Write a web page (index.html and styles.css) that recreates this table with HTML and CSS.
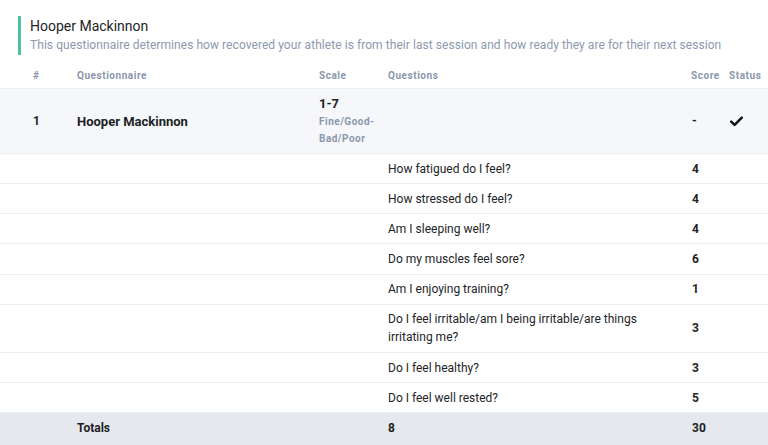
FILE: index.html
```html
<!DOCTYPE html>
<html>
<head>
<meta charset="utf-8">
<link rel="stylesheet" href="styles.css">
</head>
<body>
<div class="intro">
  <div class="intro-title">Hooper Mackinnon</div>
  <div class="intro-desc">This questionnaire determines how recovered your athlete is from their last session and how ready they are for their next session</div>
</div>
<table class="qtable">
  <colgroup>
    <col class="c-num"><col class="c-name"><col class="c-scale"><col class="c-q"><col class="c-score"><col class="c-status">
  </colgroup>
  <thead>
    <tr><th class="first">#</th><th>Questionnaire</th><th>Scale</th><th class="qcol">Questions</th><th>Score</th><th>Status</th></tr>
  </thead>
  <tbody>
    <tr class="main">
      <td class="first strong">1</td>
      <td class="name">Hooper Mackinnon</td>
      <td><div class="scale-num">1-7</div><div class="scale-label">Fine/Good-Bad/Poor</div></td>
      <td></td>
      <td class="strong score">-</td>
      <td><svg class="check" width="13" height="11" viewBox="0 0 13 11"><path d="M1.2 5.6 L4.6 8.9 L11.8 1.6" fill="none" stroke="#111" stroke-width="2.4" stroke-linecap="round" stroke-linejoin="round"/></svg></td>
    </tr>
    <tr class="q"><td class="first"></td><td></td><td></td><td class="qcol">How fatigued do I feel?</td><td class="strong score">4</td><td></td></tr>
    <tr class="q"><td class="first"></td><td></td><td></td><td class="qcol">How stressed do I feel?</td><td class="strong score">4</td><td></td></tr>
    <tr class="q"><td class="first"></td><td></td><td></td><td class="qcol">Am I sleeping well?</td><td class="strong score">4</td><td></td></tr>
    <tr class="q"><td class="first"></td><td></td><td></td><td class="qcol">Do my muscles feel sore?</td><td class="strong score">6</td><td></td></tr>
    <tr class="q"><td class="first"></td><td></td><td></td><td class="qcol">Am I enjoying training?</td><td class="strong score">1</td><td></td></tr>
    <tr class="q"><td class="first"></td><td></td><td></td><td class="qcol wrap">Do I feel irritable/am I being irritable/are things irritating me?</td><td class="strong score">3</td><td></td></tr>
    <tr class="q"><td class="first"></td><td></td><td></td><td class="qcol">Do I feel healthy?</td><td class="strong score">3</td><td></td></tr>
    <tr class="q"><td class="first"></td><td></td><td></td><td class="qcol">Do I feel well rested?</td><td class="strong score">5</td><td></td></tr>
    <tr class="totals"><td class="first"></td><td class="strong">Totals</td><td></td><td class="strong qcol">8</td><td class="strong score">30</td><td></td></tr>
  </tbody>
</table>
</body>
</html>
```
FILE: styles.css
```css
html, body {
  margin: 0;
  padding: 0;
  background: #ffffff;
  font-family: Roboto, "Liberation Sans", sans-serif;
  color: #1c1f24;
}
.intro {
  margin: 16px 0 0 18px;
  border-left: 3px solid #4cc3a0;
  padding-left: 9px;
}
.intro-title {
  font-size: 14px;
  line-height: 20px;
  color: #222428;
}
.intro-desc {
  font-size: 12px;
  line-height: 19px;
  letter-spacing: 0.06px;
  color: #8d99ae;
}
.qtable {
  margin-top: 7px;
  width: 768px;
  border-collapse: collapse;
  table-layout: fixed;
}
.c-num { width: 77px; }
.c-name { width: 242px; }
.c-scale { width: 68px; }
.c-q { width: 304px; }
.c-score { width: 38px; }
.c-status { width: 39px; }
th {
  text-align: left;
  font-size: 10px;
  font-weight: 700;
  color: #8a97ab;
  letter-spacing: 0.55px;
  height: 26px;
  padding: 0;
  vertical-align: middle;
}
td {
  padding: 0;
  font-size: 12px;
  vertical-align: middle;
}
.first { padding-left: 33px; }
.qcol { padding-left: 1px; }
.score { padding-left: 1px; }
.strong { font-weight: 700; }
tr.main td {
  background: #f5f7fa;
  padding-top: 5.5px;
  padding-bottom: 5.5px;
  border-top: 1px solid #eceef2;
  border-bottom: 1px solid #eceef2;
}
tr.main td.first { padding-left: 33px; }
tr.main td.score { padding-left: 1px; }
.name { font-size: 13px; font-weight: 700; }
.scale-num {
  font-size: 13px;
  font-weight: 700;
  line-height: 18px;
}
.scale-label {
  font-size: 10px;
  font-weight: 700;
  letter-spacing: 0.5px;
  color: #8a97ab;
  line-height: 17.5px;
}
.check { display: block; margin-left: 1px; }
tr.q td {
  line-height: 18px;
  padding-top: 5.58px;
  padding-bottom: 5.58px;
  border-bottom: 1px solid #eceef2;
  color: #222428;
}
tr.q td.first { padding-left: 33px; }
tr.q td.qcol { padding-left: 1px; }
tr.q td.score { padding-left: 1px; }
tr.q td.wrap { padding-right: 40px; }
tr.totals td {
  background: #e5e8ec;
  font-size: 12px;
  line-height: 18px;
  height: 32px;
  padding-top: 6px;
  padding-bottom: 8px;
  vertical-align: top;
}
tr.totals td.qcol { padding-left: 1px; }
tr.totals td.score { padding-left: 1px; }
```
